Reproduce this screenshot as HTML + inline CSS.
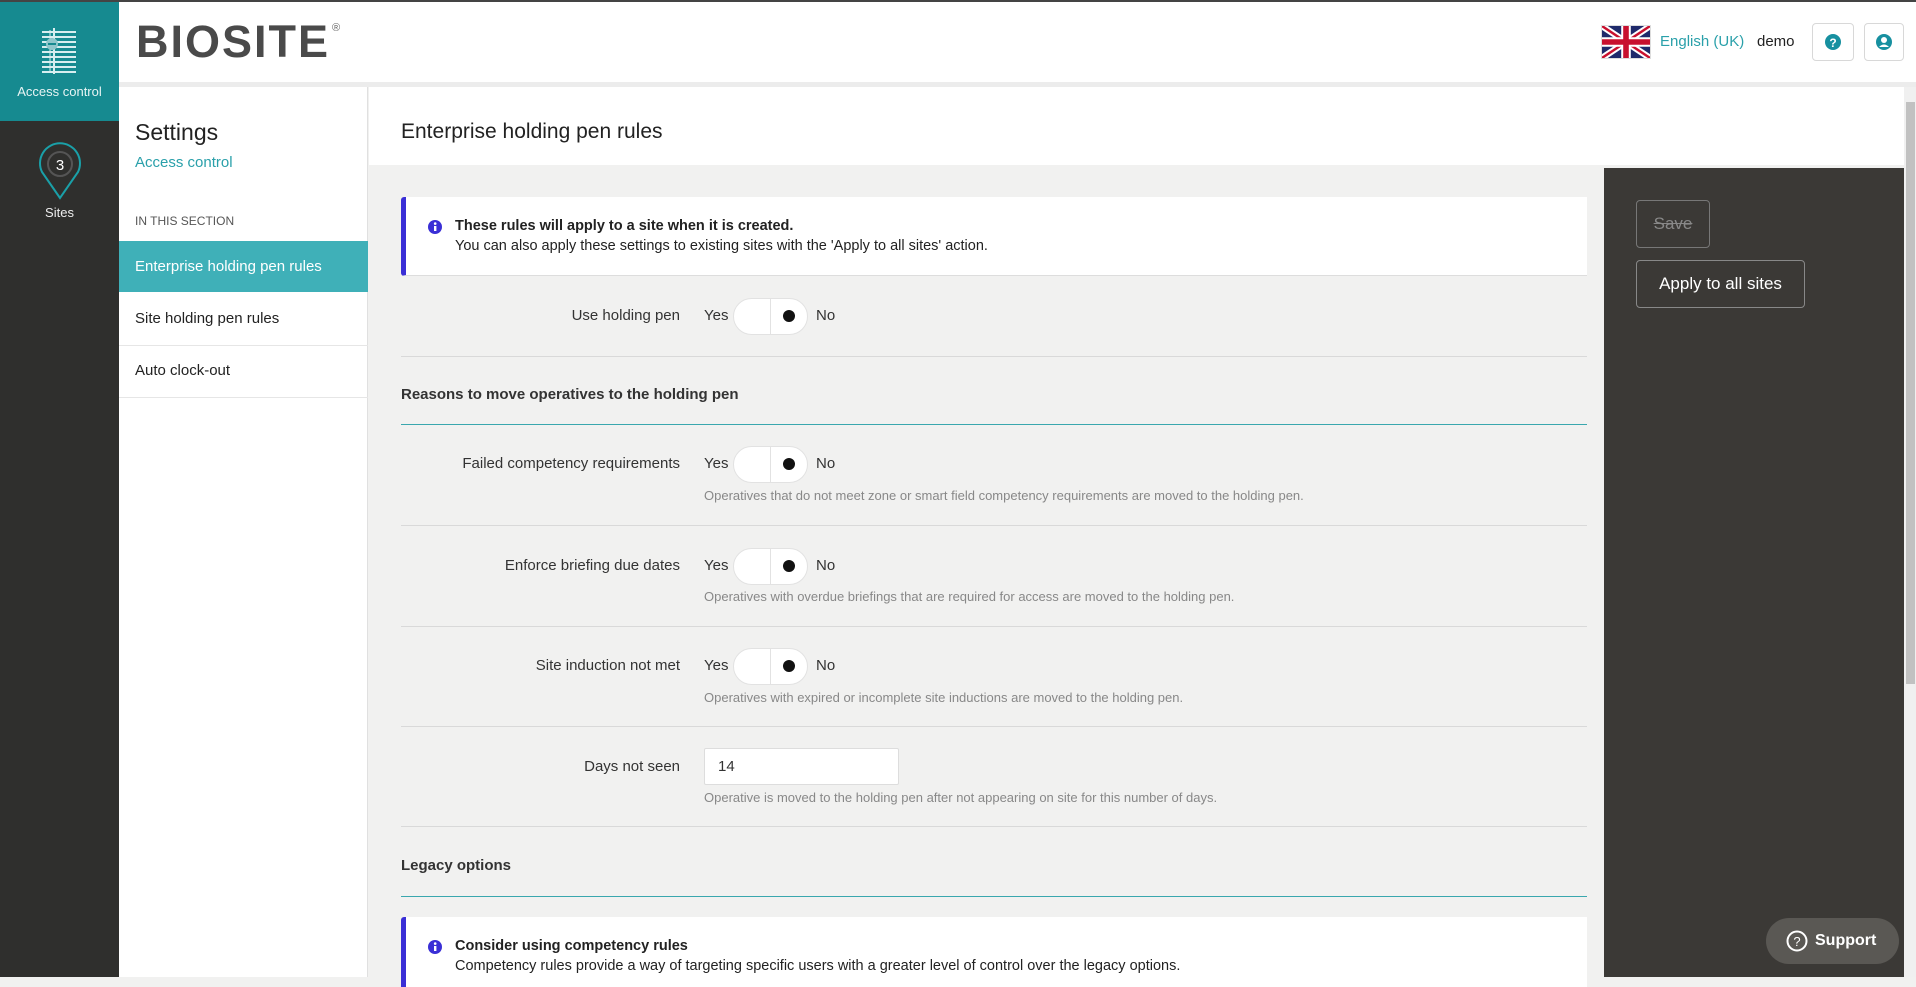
<!DOCTYPE html>
<html><head><meta charset="utf-8"><style>
*{box-sizing:border-box;margin:0;padding:0}
body{width:1916px;height:977px;overflow:hidden;font-family:"Liberation Sans",sans-serif;color:#222;background:#f1f1f0;position:relative}
.a{position:absolute}
.lbl{position:absolute;text-align:right;font-size:15px;color:#333}
.row{position:absolute;left:401px;width:1186px}
.yes{position:absolute;left:303px;font-size:15px;color:#333}
.tog{position:absolute;left:332px;width:75px;height:37px;border:1px solid #e2e2e2;border-radius:19px;background:#fff}
.tog:before{content:"";position:absolute;left:36px;top:0;bottom:0;border-left:1px solid #e2e2e2}
.tog:after{content:"";position:absolute;left:49px;top:11px;width:12px;height:12px;border-radius:50%;background:#111}
.no{position:absolute;left:415px;font-size:15px;color:#333}
.help{position:absolute;left:303px;font-size:13px;color:#888;white-space:nowrap}
.hr{position:absolute;left:401px;width:1186px;height:1px;background:#d9d9d9}
.teal{position:absolute;left:401px;width:1186px;height:1px;background:#3aa7ae}
.h{position:absolute;left:401px;font-size:15px;font-weight:bold;color:#333}
</style></head><body>
<div class="a" style="left:0;top:0;width:1916px;height:2px;background:#444"></div>
<div class="a" style="left:0;top:2px;width:119px;height:975px;background:#2f2f2d"></div>
<div class="a" style="left:0;top:2px;width:119px;height:119px;background:#168a90"></div>
<svg class="a" style="left:38px;top:26px" width="42" height="50" viewBox="0 0 42 50">
<g stroke="#d8eef0" stroke-width="2"><line x1="16" y1="2" x2="16" y2="48"/><line x1="12" y1="4" x2="12" y2="46" stroke-width="1"/>
<line x1="4" y1="6" x2="38" y2="6"/><line x1="4" y1="11" x2="38" y2="11"/><line x1="4" y1="16" x2="38" y2="16"/><line x1="4" y1="21" x2="38" y2="21"/><line x1="4" y1="26" x2="38" y2="26"/><line x1="4" y1="31" x2="38" y2="31"/><line x1="4" y1="36" x2="38" y2="36"/><line x1="4" y1="41" x2="38" y2="41"/><line x1="4" y1="46" x2="38" y2="46"/></g>
<circle cx="14" cy="18" r="6" fill="#8fc6cb"/><line x1="10" y1="18" x2="18" y2="18" stroke="#168a90" stroke-width="2"/></svg>
<div class="a" style="left:0;top:84px;width:119px;text-align:center;color:#e8f4f4;font-size:13px">Access control</div>
<svg class="a" style="left:36px;top:142px" width="48" height="58" viewBox="0 0 48 58">
<path d="M24 56 L6 30 A20 20 0 1 1 42 30 Z" fill="none" stroke="#1aa0a8" stroke-width="2"/>
<circle cx="24" cy="22" r="12" fill="none" stroke="#555" stroke-width="2"/>
<text x="24" y="28" fill="#fff" font-size="15" text-anchor="middle" font-family="Liberation Sans">3</text></svg>
<div class="a" style="left:0;top:205px;width:119px;text-align:center;color:#eee;font-size:13px">Sites</div>
<div class="a" style="left:119px;top:2px;width:1797px;height:80px;background:#fff"></div>
<div class="a" style="left:119px;top:82px;width:1797px;height:5px;background:#ececec"></div>
<div class="a" style="left:136px;top:18px;font-size:45px;font-weight:bold;color:#4a4a4a;letter-spacing:2px;line-height:48px">BIOSITE</div>
<div class="a" style="left:332px;top:22px;font-size:11px;color:#666">®</div>
<svg class="a" style="left:1601px;top:25px;border:1px solid #ddd" width="50" height="34" viewBox="0 0 60 40">
<rect width="60" height="40" fill="#1f2a6b"/><path d="M0 0L60 40M60 0L0 40" stroke="#fff" stroke-width="8"/><path d="M0 0L60 40M60 0L0 40" stroke="#c8102e" stroke-width="3"/>
<path d="M30 0V40M0 20H60" stroke="#fff" stroke-width="12"/><path d="M30 0V40M0 20H60" stroke="#c8102e" stroke-width="7"/></svg>
<div class="a" style="left:1660px;top:33px;font-size:15px;color:#2aa0aa">English (UK)</div>
<div class="a" style="left:1757px;top:33px;font-size:15px;color:#222">demo</div>
<div class="a" style="left:1812px;top:23px;width:42px;height:38px;border:1px solid #d8d8d8;border-radius:4px"></div>
<svg class="a" style="left:1824px;top:33px" width="18" height="18" viewBox="0 0 18 18"><circle cx="9" cy="9" r="8" fill="#1790a0"/><text x="9" y="14" fill="#fff" font-size="12" font-weight="bold" text-anchor="middle" font-family="Liberation Sans">?</text></svg>
<div class="a" style="left:1864px;top:23px;width:40px;height:38px;border:1px solid #d8d8d8;border-radius:4px"></div>
<svg class="a" style="left:1875px;top:33px" width="18" height="18" viewBox="0 0 18 18"><circle cx="9" cy="9" r="8" fill="#1790a0"/><circle cx="9" cy="7" r="3" fill="#fff"/><path d="M4 14 Q9 9 14 14" fill="#fff"/></svg>
<div class="a" style="left:119px;top:87px;width:249px;height:890px;background:#fff;border-right:1px solid #e0e0e0"></div>
<div class="a" style="left:135px;top:119px;font-size:23px;color:#222">Settings</div>
<div class="a" style="left:135px;top:154px;font-size:15px;color:#2aa0aa">Access control</div>
<div class="a" style="left:135px;top:214px;font-size:12px;color:#555">IN THIS SECTION</div>
<div class="a" style="left:119px;top:241px;width:249px;height:51px;background:#3fb0b8"></div>
<div class="a" style="left:135px;top:258px;font-size:15px;color:#fff">Enterprise holding pen rules</div>
<div class="a" style="left:135px;top:310px;font-size:15px;color:#222">Site holding pen rules</div>
<div class="a" style="left:119px;top:345px;width:249px;border-top:1px solid #e6e6e6"></div>
<div class="a" style="left:135px;top:362px;font-size:15px;color:#222">Auto clock-out</div>
<div class="a" style="left:119px;top:397px;width:249px;border-top:1px solid #e6e6e6"></div>
<div class="a" style="left:369px;top:87px;width:1535px;height:78px;background:#fff"></div>
<div class="a" style="left:401px;top:120px;font-size:21px;color:#222">Enterprise holding pen rules</div>
<div class="a" style="left:1604px;top:168px;width:300px;height:809px;background:#3b3936"></div>
<div class="a" style="left:1636px;top:200px;width:74px;height:48px;border:1px solid #777;border-radius:4px;color:#888;font-size:17px;text-align:center;line-height:46px;text-decoration:line-through">Save</div>
<div class="a" style="left:1636px;top:260px;width:169px;height:48px;border:1px solid #888;border-radius:4px;color:#fff;font-size:17px;text-align:center;line-height:46px">Apply to all sites</div>
<div class="a" style="left:1904px;top:87px;width:12px;height:890px;background:#f0f0f0"></div>
<div class="a" style="left:1906px;top:102px;width:9px;height:582px;background:#c1c1c1"></div>
<div class="a" style="left:401px;top:197px;width:1186px;height:79px;background:#fff;border-left:5px solid #3a2fd6;border-bottom:1px solid #ddd;border-radius:3px 0 0 3px"></div>
<svg class="a" style="left:427px;top:219px" width="16" height="16"><circle cx="8" cy="8" r="7" fill="#3a2fd6"/><rect x="7" y="7" width="2.4" height="5" fill="#fff"/><circle cx="8.2" cy="4.6" r="1.3" fill="#fff"/></svg>
<div class="a" style="left:455px;top:218px;font-size:14.5px;font-weight:bold;color:#222">These rules will apply to a site when it is created.</div>
<div class="a" style="left:455px;top:238px;font-size:14.5px;color:#222">You can also apply these settings to existing sites with the 'Apply to all sites' action.</div>
<div class="row" style="top:298px;height:37px"><div class="lbl" style="right:907px;top:9px;white-space:nowrap">Use holding pen</div><div class="yes" style="top:9px">Yes</div><div class="tog"></div><div class="no" style="top:9px">No</div></div>
<div class="hr" style="top:356px"></div>
<div class="h" style="top:386px">Reasons to move operatives to the holding pen</div>
<div class="teal" style="top:424px"></div>
<div class="row" style="top:446px;height:37px"><div class="lbl" style="right:907px;top:9px;white-space:nowrap">Failed competency requirements</div><div class="yes" style="top:9px">Yes</div><div class="tog"></div><div class="no" style="top:9px">No</div></div>
<div class="row" style="top:488px"><div class="help">Operatives that do not meet zone or smart field competency requirements are moved to the holding pen.</div></div>
<div class="hr" style="top:525px"></div>
<div class="row" style="top:548px;height:37px"><div class="lbl" style="right:907px;top:9px;white-space:nowrap">Enforce briefing due dates</div><div class="yes" style="top:9px">Yes</div><div class="tog"></div><div class="no" style="top:9px">No</div></div>
<div class="row" style="top:589px"><div class="help">Operatives with overdue briefings that are required for access are moved to the holding pen.</div></div>
<div class="hr" style="top:626px"></div>
<div class="row" style="top:648px;height:37px"><div class="lbl" style="right:907px;top:9px;white-space:nowrap">Site induction not met</div><div class="yes" style="top:9px">Yes</div><div class="tog"></div><div class="no" style="top:9px">No</div></div>
<div class="row" style="top:690px"><div class="help">Operatives with expired or incomplete site inductions are moved to the holding pen.</div></div>
<div class="hr" style="top:726px"></div>
<div class="row" style="top:748px;height:37px"><div class="lbl" style="right:907px;top:10px;white-space:nowrap">Days not seen</div>
<div class="a" style="left:303px;top:0;width:195px;height:37px;background:#fff;border:1px solid #ddd;border-radius:2px;font-size:15px;padding:9px 13px;color:#333">14</div></div>
<div class="row" style="top:790px"><div class="help">Operative is moved to the holding pen after not appearing on site for this number of days.</div></div>
<div class="hr" style="top:826px"></div>
<div class="h" style="top:857px">Legacy options</div>
<div class="teal" style="top:896px"></div>
<div class="a" style="left:401px;top:917px;width:1186px;height:70px;background:#fff;border-left:5px solid #3a2fd6;border-radius:3px 0 0 0"></div>
<svg class="a" style="left:427px;top:939px" width="16" height="16"><circle cx="8" cy="8" r="7" fill="#3a2fd6"/><rect x="7" y="7" width="2.4" height="5" fill="#fff"/><circle cx="8.2" cy="4.6" r="1.3" fill="#fff"/></svg>
<div class="a" style="left:455px;top:938px;font-size:14.5px;font-weight:bold;color:#222">Consider using competency rules</div>
<div class="a" style="left:455px;top:958px;font-size:14.5px;color:#222">Competency rules provide a way of targeting specific users with a greater level of control over the legacy options.</div>
<div class="a" style="left:1766px;top:918px;width:133px;height:46px;border-radius:23px;background:#5a5854"></div>
<svg class="a" style="left:1786px;top:930px" width="22" height="22"><circle cx="11" cy="11" r="9.5" fill="none" stroke="#fff" stroke-width="2"/><text x="11" y="16" fill="#fff" font-size="13" text-anchor="middle" font-family="Liberation Sans">?</text></svg>
<div class="a" style="left:1815px;top:932px;font-size:16px;font-weight:bold;color:#fff;line-height:18px">Support</div>
</body></html>
